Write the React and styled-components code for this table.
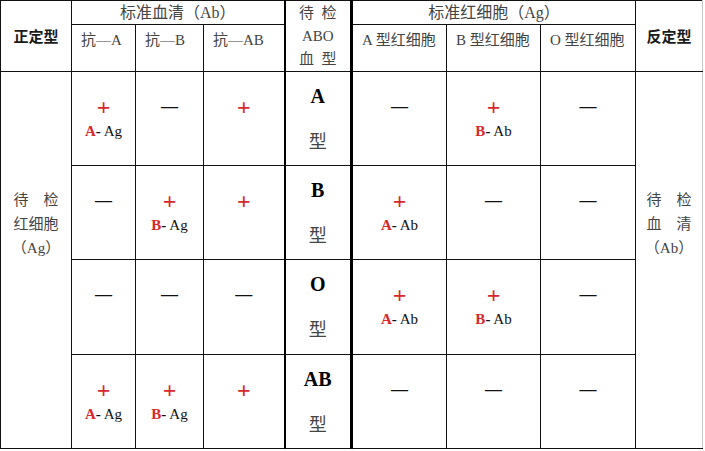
import React from "react";
import styled, { createGlobalStyle, css } from "styled-components";

const Global = createGlobalStyle`
  html, body { margin: 0; padding: 0; background: #fff; }
  body { font-family: "Liberation Serif", "Noto Sans CJK SC", serif; }
`;

const Table = styled.table`
  border-collapse: collapse;
  table-layout: fixed;
  width: 703px;
  margin: 0;
  border-top: 1px solid #111;
  border-left: 1px solid #111;
  border-bottom: 1px solid #111;
`;

const Col = styled.col`
  width: ${(p) => p.$w}px;
`;

const Row = styled.tr`
  height: ${(p) => p.$h}px;
`;

const Cell = styled.td`
  border: 1px solid #111;
  padding: 0;
  vertical-align: middle;
  text-align: center;
  color: #111;
  ${(p) =>
    p.$thick &&
    css`
      border-left: 2px solid #000;
      border-right: 3px solid #000;
    `}
  ${(p) =>
    p.$lastCol &&
    css`
      border-right: 1px solid #c8c8c8;
    `}
`;

const BoldHead = styled(Cell)`
  font-family: "Noto Sans CJK SC", sans-serif;
  font-weight: 700;
  font-size: 15px;
  color: #1a1a1a;
  line-height: 20px;
`;

const GroupHead = styled(Cell)`
  font-size: 16px;
  line-height: 22px;
  color: #444;
  padding-top: 1px;
`;

const SubHead = styled(Cell)`
  font-size: 15px;
  line-height: 22px;
  color: #444;
  text-align: left;
  vertical-align: top;
  padding: 4px 0 0 9px;
  white-space: nowrap;
`;

const TypeHead = styled(Cell)`
  font-size: 15px;
  line-height: 23px;
  color: #444;
`;

const SideCell = styled(Cell)`
  font-size: 15px;
  line-height: 24px;
  color: #444;
  padding-bottom: 72px;
`;

const DataCell = styled(Cell)`
  line-height: 24px;
`;

const Line = styled.div`
  height: 24px;
  font-size: 15px;
`;

const Plus = styled.span`
  color: #d8282c;
  font-size: 24px;
  font-weight: 700;
`;

const Dash = styled.span`
  font-size: 17px;
  font-weight: 700;
  color: #111;
`;

const RedBold = styled.b`
  color: #d8282c;
`;

const TypeCell = styled(Cell)`
  line-height: 46px;
`;

const TypeLetter = styled.div`
  font-size: 20px;
  font-weight: 700;
  color: #000;
`;

const TypeChar = styled.div`
  font-size: 18px;
  color: #444;
`;

function Result({ v, label, suffix }) {
  return (
    <>
      <Line>{v === "+" ? <Plus>+</Plus> : <Dash>—</Dash>}</Line>
      <Line>
        {label ? (
          <>
            <RedBold>{label}</RedBold>
            <b>-</b> {suffix}
          </>
        ) : (
          "\u00a0"
        )}
      </Line>
    </>
  );
}

const rows = [
  {
    type: "A",
    h: 94,
    sera: [
      { v: "+", label: "A", suffix: "Ag" },
      { v: "-" },
      { v: "+" },
    ],
    cells: [{ v: "-" }, { v: "+", label: "B", suffix: "Ab" }, { v: "-" }],
  },
  {
    type: "B",
    h: 94,
    sera: [{ v: "-" }, { v: "+", label: "B", suffix: "Ag" }, { v: "+" }],
    cells: [{ v: "+", label: "A", suffix: "Ab" }, { v: "-" }, { v: "-" }],
  },
  {
    type: "O",
    h: 95,
    sera: [{ v: "-" }, { v: "-" }, { v: "-" }],
    cells: [
      { v: "+", label: "A", suffix: "Ab" },
      { v: "+", label: "B", suffix: "Ab" },
      { v: "-" },
    ],
  },
  {
    type: "AB",
    h: 94,
    sera: [
      { v: "+", label: "A", suffix: "Ag" },
      { v: "+", label: "B", suffix: "Ag" },
      { v: "+" },
    ],
    cells: [{ v: "-" }, { v: "-" }, { v: "-" }],
  },
];

export default function App() {
  return (
    <>
      <Global />
      <Table>
        <colgroup>
          <Col $w={71} />
          <Col $w={64} />
          <Col $w={68} />
          <Col $w={81} />
          <Col $w={67} />
          <Col $w={95} />
          <Col $w={94} />
          <Col $w={95} />
          <Col $w={67} />
        </colgroup>
        <tbody>
          <Row $h={24}>
            <BoldHead rowSpan={2}>正定型</BoldHead>
            <GroupHead colSpan={3}>标准血清（Ab）</GroupHead>
            <TypeHead rowSpan={2} $thick>
              <div>待&nbsp;&nbsp;检</div>
              <div>ABO</div>
              <div>血&nbsp;&nbsp;型</div>
            </TypeHead>
            <GroupHead colSpan={3}>标准红细胞（Ag）</GroupHead>
            <BoldHead rowSpan={2} $lastCol>
              反定型
            </BoldHead>
          </Row>
          <Row $h={47}>
            <SubHead>抗—A</SubHead>
            <SubHead>抗—B</SubHead>
            <SubHead>抗—AB</SubHead>
            <SubHead>A 型红细胞</SubHead>
            <SubHead>B 型红细胞</SubHead>
            <SubHead>O 型红细胞</SubHead>
          </Row>
          {rows.map((r, i) => (
            <Row $h={r.h} key={r.type}>
              {i === 0 && (
                <SideCell rowSpan={4}>
                  <div>待　检</div>
                  <div>红细胞</div>
                  <div>（Ag）</div>
                </SideCell>
              )}
              {r.sera.map((c, j) => (
                <DataCell key={j}>
                  <Result {...c} />
                </DataCell>
              ))}
              <TypeCell $thick>
                <TypeLetter>{r.type}</TypeLetter>
                <TypeChar>型</TypeChar>
              </TypeCell>
              {r.cells.map((c, j) => (
                <DataCell key={j}>
                  <Result {...c} />
                </DataCell>
              ))}
              {i === 0 && (
                <SideCell rowSpan={4} $lastCol>
                  <div>待　检</div>
                  <div>血　清</div>
                  <div>（Ab）</div>
                </SideCell>
              )}
            </Row>
          ))}
        </tbody>
      </Table>
    </>
  );
}
